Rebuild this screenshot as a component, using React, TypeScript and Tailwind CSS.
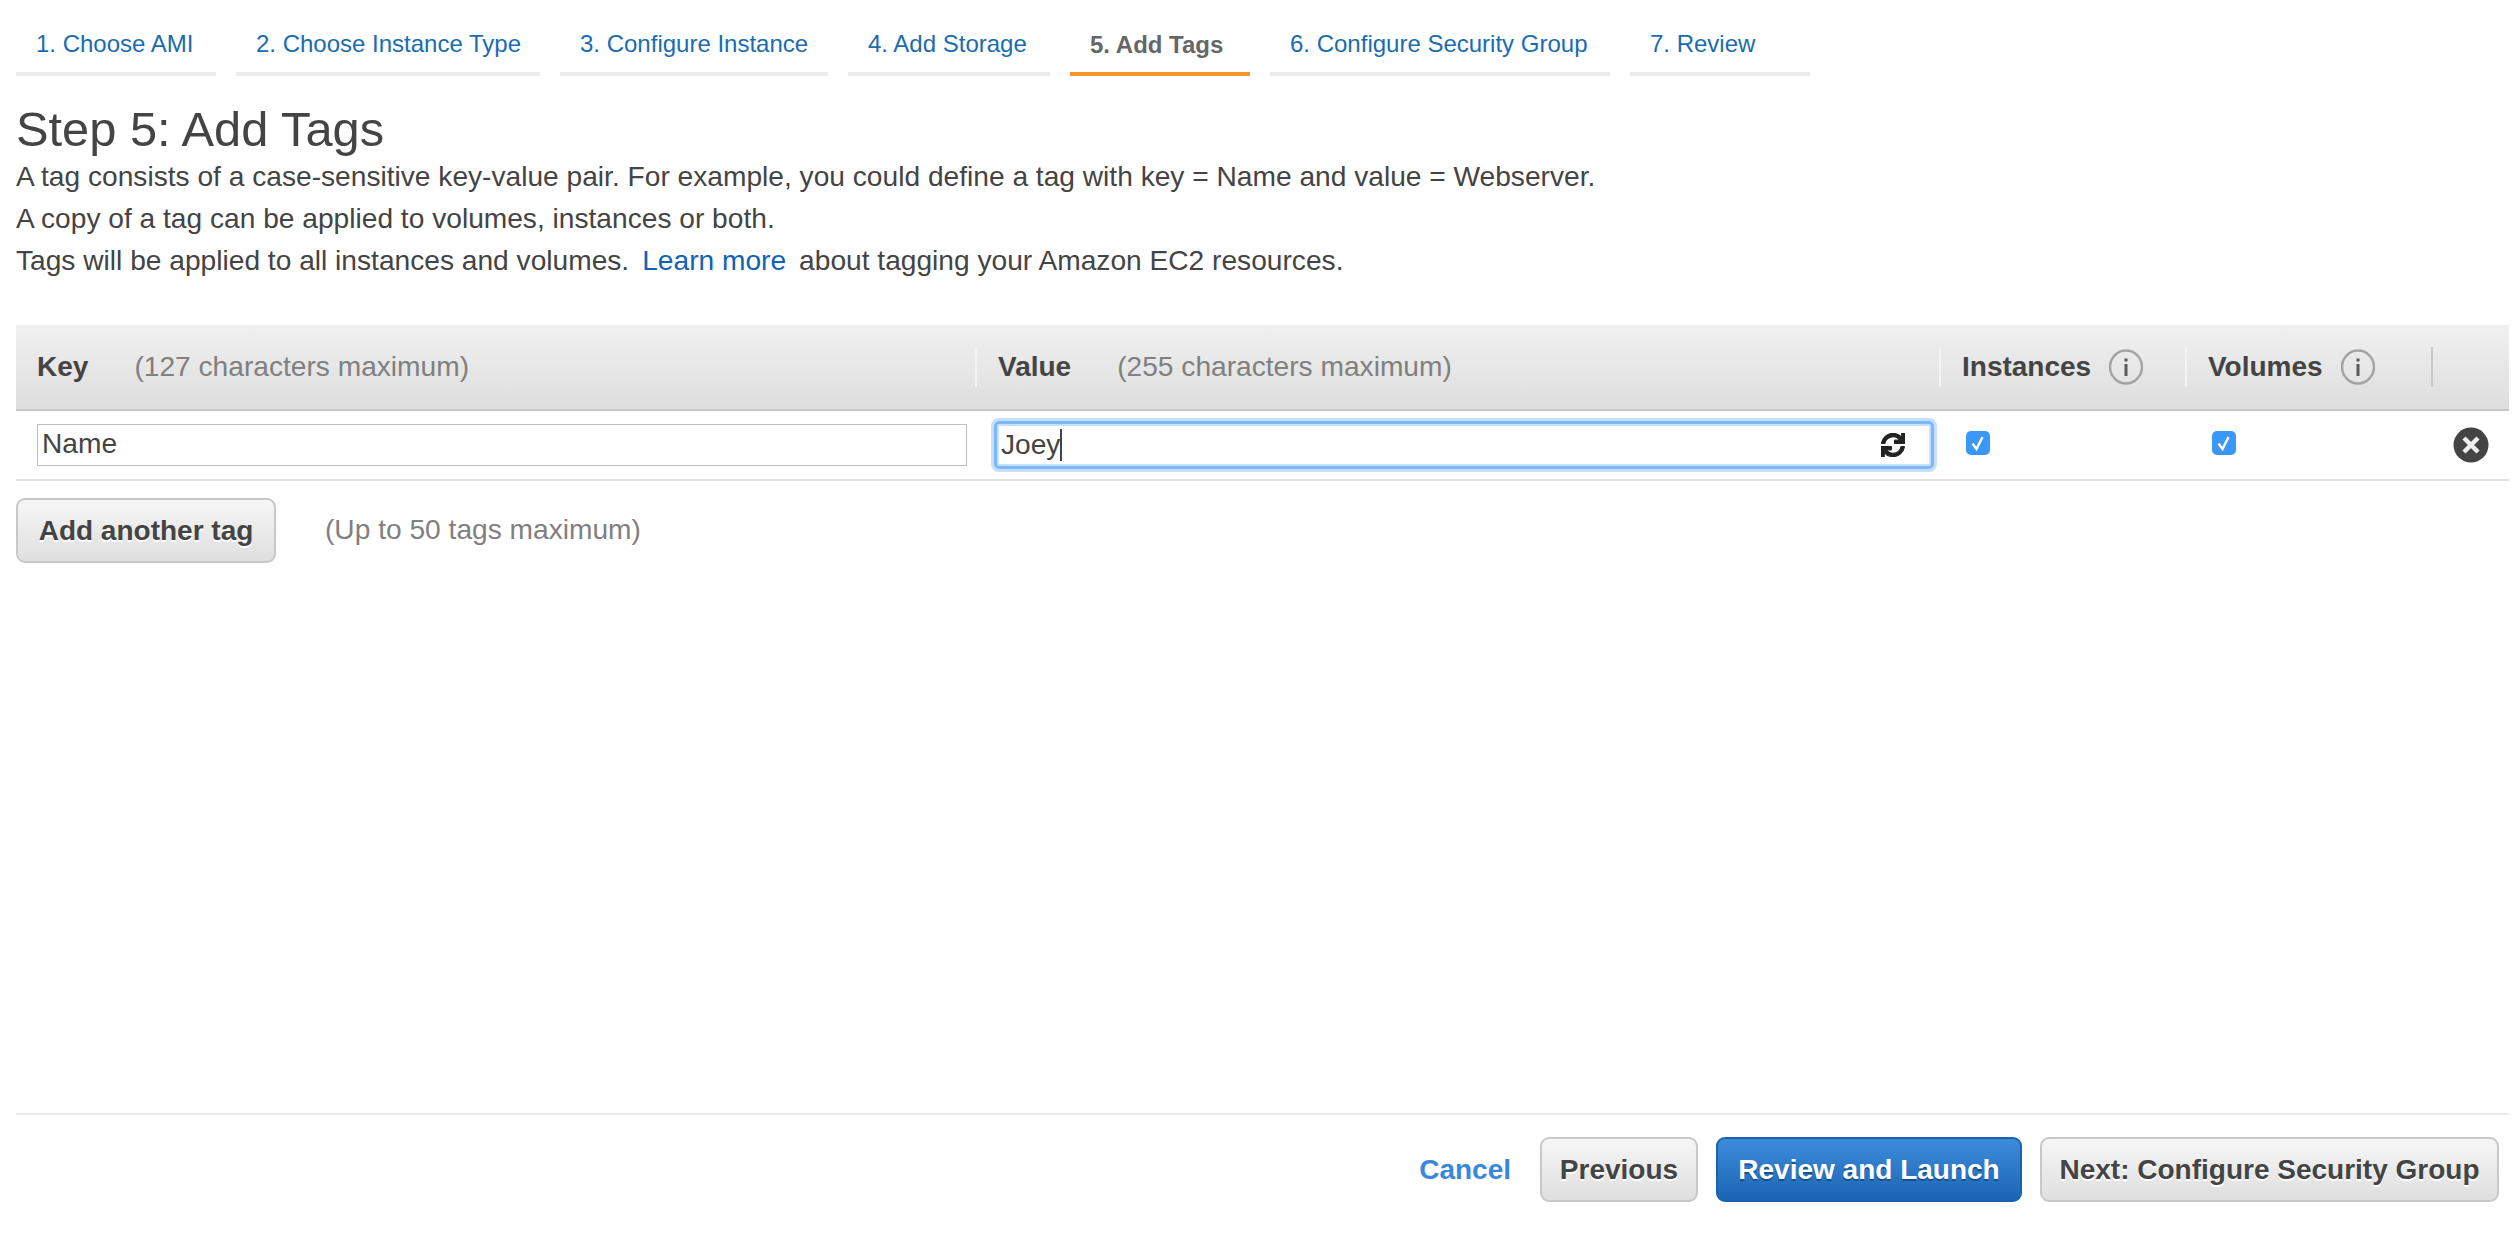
import React from "react";
import { FaSync } from "react-icons/fa";

const steps = [
  { label: "1. Choose AMI", width: "w-[200px]" },
  { label: "2. Choose Instance Type", width: "w-[304px]" },
  { label: "3. Configure Instance", width: "w-[268px]" },
  { label: "4. Add Storage", width: "w-[202px]" },
  { label: "5. Add Tags", width: "w-[180px]", active: true },
  { label: "6. Configure Security Group", width: "w-[340px]" },
  { label: "7. Review", width: "w-[180px]" },
];

const InfoIcon = () => (
  <svg viewBox="0 0 34 36" className="h-[36px] w-[34px]">
    <ellipse cx="17" cy="18" rx="16" ry="16.5" fill="none" stroke="#a3a3a3" strokeWidth="2.5" />
    <rect x="15.5" y="15" width="3" height="12" fill="#5a5a5a" />
    <rect x="15.5" y="9.5" width="3" height="3" fill="#5a5a5a" />
  </svg>
);

const CheckBox = () => (
  <span className="flex h-[24px] w-[24px] items-center justify-center rounded-[5px] bg-[#3b97f8]">
    <svg viewBox="0 0 24 24" className="h-[24px] w-[24px]">
      <path d="M6.5 12.5 L10.5 18 L16.5 6" fill="none" stroke="#fff" strokeWidth="2.4" />
    </svg>
  </span>
);

const RemoveIcon = () => (
  <svg viewBox="0 0 36 36" className="h-[36px] w-[36px]">
    <circle cx="18" cy="18" r="17.5" fill="#444" />
    <path d="M11 11 L25 25 M25 11 L11 25" stroke="#eee" strokeWidth="4.5" />
  </svg>
);

const HeaderCell = ({ label, note }: { label: string; note: string }) => (
  <div className="flex h-[40px] items-center border-l-2 border-[#f4f4f4] pl-[21px] first:border-l-0">
    <b className="text-[28px] text-[#444]">{label}</b>
    <span className="ml-[46px] text-[#808080]">{note}</span>
  </div>
);

const IconHeaderCell = ({ label }: { label: string }) => (
  <div className="flex h-[40px] items-center border-l-2 border-[#f4f4f4] pl-[21px]">
    <b className="text-[28px] text-[#444]">{label}</b>
    <span className="ml-[18px] flex">
      <InfoIcon />
    </span>
  </div>
);

const greyButton =
  "h-[65px] rounded-[9px] border-2 border-[#c8c8c8] bg-gradient-to-b from-[#f6f6f6] to-[#dfdfdf] text-[28px] font-bold text-[#444] [text-shadow:0_2px_0_#fff]";

export default function App() {
  return (
    <div className="flex h-[1235px] flex-col overflow-hidden bg-white pl-[16px] pr-[10px] font-['Liberation_Sans',Arial,sans-serif] text-[28.15px] text-[#444]">
      <nav className="flex gap-[20px] text-[24px]">
        {steps.map((step) =>
          step.active ? (
            <div
              key={step.label}
              className={`${step.width} flex h-[76px] items-center border-b-4 border-[#f7952b] pl-[20px] pt-[18px] font-bold text-[#666]`}
            >
              {step.label}
            </div>
          ) : (
            <a
              key={step.label}
              className={`${step.width} flex h-[76px] items-center border-b-4 border-[#ebebeb] pl-[20px] pt-[16px] text-[#1a6cb0]`}
            >
              {step.label}
            </a>
          ),
        )}
      </nav>

      <h1 className="mt-[27px] text-[48.8px] leading-[53px] text-[#444]">Step 5: Add Tags</h1>
      <div className="leading-[42px]">
        <p>A tag consists of a case-sensitive key-value pair. For example, you could define a tag with key = Name and value = Webserver.</p>
        <p>A copy of a tag can be applied to volumes, instances or both.</p>
        <p>
          Tags will be applied to all instances and volumes.
          <a className="mx-[13px] text-[#0f62b5]">Learn more</a>
          about tagging your Amazon EC2 resources.
        </p>
      </div>

      <div className="mt-[43px] grid grid-cols-[959px_964px_246px_246px_78px]">
        <div className="col-span-5 grid h-[86px] grid-cols-subgrid items-center border-b-2 border-[#c8c8c8] bg-gradient-to-b from-[#f0f0f0] to-[#dedede]">
          <HeaderCell label="Key" note="(127 characters maximum)" />
          <HeaderCell label="Value" note="(255 characters maximum)" />
          <IconHeaderCell label="Instances" />
          <IconHeaderCell label="Volumes" />
          <div className="h-[40px] border-l-2 border-[#c8c8c8]" />
        </div>

        <div className="col-span-5 grid h-[70px] grid-cols-subgrid items-center border-b-2 border-[#e0e0e0]">
          <div className="pl-[21px] pr-[8px]">
            <input
              readOnly
              value="Name"
              className="-mt-[1px] block h-[42px] w-full border border-[#bdbdbd] px-[4px] text-[#444] outline-none"
            />
          </div>
          <div className="pl-[19px] pr-[5px]">
            <div className="flex h-[48px] items-center rounded-[5px] border-[3px] border-[#7db6f9] pl-[4px] pr-[26px] shadow-[0_0_0_3px_#c5e0fd,inset_0_0_0_2px_#c5e0fd]">
              <span>Joey</span>
              <span className="h-[32px] w-[2px] bg-[#444]" />
              <FaSync className="ml-auto h-[24px] w-[24px] stroke-[24] text-[#222]" />
            </div>
          </div>
          <div className="-mt-[4px] pl-[27px]">
            <CheckBox />
          </div>
          <div className="-mt-[4px] pl-[27px]">
            <CheckBox />
          </div>
          <div className="pl-[22px]">
            <RemoveIcon />
          </div>
        </div>
      </div>

      <div className="mt-[17px] flex items-center">
        <button className={`${greyButton} w-[260px]`}>Add another tag</button>
        <span className="ml-[49px] text-[#808080]">(Up to 50 tags maximum)</span>
      </div>

      <div className="mt-auto flex items-center justify-end gap-[18px] border-t-2 border-[#ebebeb] pb-[33px] pr-[10px] pt-[22px]">
        <a className="mr-[11px] text-[28px] font-bold text-[#3a87dc]">Cancel</a>
        <button className={`${greyButton} w-[158px]`}>Previous</button>
        <button className="h-[65px] w-[306px] rounded-[9px] border-2 border-[#1a62ad] bg-gradient-to-b from-[#3d8cdb] to-[#1a66b5] text-[28px] font-bold text-white [text-shadow:0_2px_0_#14528f]">
          Review and Launch
        </button>
        <button className={`${greyButton} w-[459px]`}>Next: Configure Security Group</button>
      </div>
    </div>
  );
}
